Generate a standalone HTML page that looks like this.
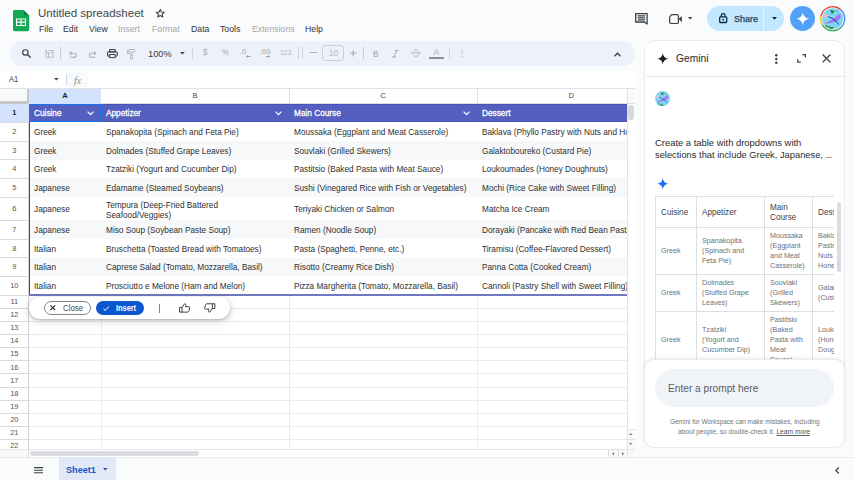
<!DOCTYPE html>
<html lang="en">
<head>
<meta charset="utf-8">
<title>Untitled spreadsheet - Google Sheets</title>
<style>
*{box-sizing:border-box;margin:0;padding:0}
html,body{width:854px;height:480px;overflow:hidden}
body{position:relative;background:#f9fbfd;font-family:"Liberation Sans",Arial,sans-serif;color:#1f1f1f;-webkit-font-smoothing:antialiased}
.a{position:absolute}
.t{position:absolute;white-space:nowrap;transform-origin:0 50%;line-height:1}
svg{position:absolute;overflow:visible}
/* header */
#title{left:37.700px;top:7.500px;font-size:11.800px;color:#444746;transform:scaleX(.978)}
.menu{top:23.600px;font-size:9.400px;color:#333639;transform:scaleX(.93)}
.menu.dis{color:#a3a6aa}
/* toolbar */
#toolbar{left:10px;top:40.5px;width:624.5px;height:25px;border-radius:12.5px;background:#edf2fa}
.sep{position:absolute;width:1px;background:#c9ccd1;top:47px;height:12px}
.tb{top:48.500px;font-size:9.400px;color:#a9adb3}
/* formula bar */
#fbar{left:0;top:71px;width:634.7px;height:17.3px;background:#fff}
/* grid */
#grid{left:0;top:88px;width:634.7px;height:369.3px;background:#fff;overflow:hidden}
.vl{position:absolute;width:1px;background:#dcdcdc}
.vl.lt{background:#ebebed}
.hl{position:absolute;height:1px;background:linear-gradient(90deg,#dadada 0,#dadada 28.500px,#ebebed 28.500px)}
.rn{position:absolute;left:0;width:28.5px;text-align:center;font-size:7.4px;color:#555;line-height:1}
.cn{position:absolute;top:4.100px;font-size:7.600px;color:#444;line-height:1;text-align:center}
.row{position:absolute;left:29.5px;width:597.7px;overflow:hidden}
.row.alt{background:#f6f8f9}
.hrow>*{margin-top:0}
.c{position:absolute;white-space:nowrap;font-size:8.800px;color:#2d2f31;line-height:1;transform-origin:0 50%;transform:scaleX(.939);margin-top:0.700px}
.hc{position:absolute;white-space:nowrap;font-size:8.9px;color:#fff;line-height:1;transform-origin:0 50%;transform:scaleX(.93);-webkit-text-stroke:0.280px #fff}
/* panel */
#panel{left:643.900px;top:40.200px;width:200.700px;height:408px;background:#fff;border:1px solid #e9ebee;border-radius:11px;overflow:hidden}
.pt{position:absolute;white-space:nowrap;line-height:1;transform-origin:0 50%}
.gc{position:absolute;font-size:7.300px;line-height:10px;color:#6e7277;transform-origin:0 0;transform:scaleX(.98);margin-left:0.400px;white-space:nowrap}
.gh{position:absolute;font-size:8.200px;line-height:10px;color:#3c4043;transform-origin:0 0;transform:scaleX(.995);margin-left:0.400px;margin-top:0.700px;white-space:nowrap}
</style>
</head>
<body>

<!-- ===== HEADER ===== -->
<svg class="a" style="left:13px;top:9.8px" width="16.2" height="21.2" viewBox="0 0 16.2 21.2">
  <path d="M1.6 0H10.6L16.2 5.6V19.6A1.6 1.6 0 0 1 14.6 21.2H1.6A1.6 1.6 0 0 1 0 19.6V1.6A1.6 1.6 0 0 1 1.6 0Z" fill="#11a953"/>
  <path d="M11 0.400L15.800 5.200H12.400A1.400 1.400 0 0 1 11 3.800Z" fill="#0b7f40"/>
  <path d="M3 8.400V16H13.100V8.400ZM4.100 9.500H7.500V11.600H4.100ZM8.600 9.500H12V11.600H8.600ZM4.100 12.700H7.500V14.900H4.100ZM8.600 12.700H12V14.900H8.600Z" fill="#fff" fill-rule="evenodd"/>
</svg>
<div class="t" id="title">Untitled spreadsheet</div>
<svg class="a" style="left:155.300px;top:8.400px" width="10.600" height="10.600" viewBox="0 0 24 24"><path d="M12 3.2l2.6 6 6.5.6-4.9 4.3 1.5 6.4L12 17.1l-5.7 3.4 1.5-6.4-4.9-4.3 6.5-.6z" fill="none" stroke="#3c4043" stroke-width="2.400" stroke-linejoin="round"/></svg>

<div class="t menu" style="left:38.8px">File</div>
<div class="t menu" style="left:63.2px">Edit</div>
<div class="t menu" style="left:88.7px">View</div>
<div class="t menu dis" style="left:117.8px">Insert</div>
<div class="t menu dis" style="left:151.6px">Format</div>
<div class="t menu" style="left:190.8px">Data</div>
<div class="t menu" style="left:220.2px">Tools</div>
<div class="t menu dis" style="left:251.6px">Extensions</div>
<div class="t menu" style="left:305px">Help</div>

<!-- right header icons -->
<svg class="a" style="left:634.5px;top:12.9px" width="12.8" height="12.2" viewBox="0 0 12.8 12.2">
  <path d="M0.7 0.7H12.1V11L9.6 9H0.7Z" fill="none" stroke="#3c4043" stroke-width="1.3" stroke-linejoin="round"/>
  <path d="M2.700 2.900H10.100M2.700 4.900H10.100M2.700 6.900H10.100" stroke="#3c4043" stroke-width="1.050"/>
</svg>
<svg class="a" style="left:669px;top:14px" width="13.2" height="10.2" viewBox="0 0 13.2 10.2">
  <path d="M2.6 0.7H8.2A1.2 1.2 0 0 1 9.4 1.9V8.3A1.2 1.2 0 0 1 8.2 9.5H1.9A1.2 1.2 0 0 1 0.7 8.3V2.8Z" fill="none" stroke="#3c4043" stroke-width="1.200" stroke-linejoin="round"/>
  <path d="M9.900 5.100L12.500 2.700V7.500Z" fill="#3c4043" stroke="#3c4043" stroke-width="0.700" stroke-linejoin="round"/>
</svg>
<svg class="a" style="left:688px;top:17px" width="4.4" height="2.4" viewBox="0 0 4.4 2.4"><path d="M0 0H4.4L2.2 2.4Z" fill="#3c4043"/></svg>

<div class="a" style="left:707px;top:6.2px;width:77.3px;height:25px;border-radius:12.5px;background:#c2e7ff"></div>
<div class="a" style="left:763px;top:6.2px;width:1px;height:25px;background:#e4f4ff"></div>
<svg class="a" style="left:718.8px;top:13.2px" width="8.4" height="10.2" viewBox="0 0 8.4 10.2">
  <rect x="0.65" y="3.9" width="7.1" height="5.6" rx="0.9" fill="none" stroke="#0d2a45" stroke-width="1.3"/>
  <path d="M2.3 3.9V2.6A1.9 1.9 0 0 1 6.1 2.6V3.9" fill="none" stroke="#0d2a45" stroke-width="1.2"/>
  <circle cx="4.2" cy="6.7" r="0.9" fill="#0d2a45"/>
</svg>
<div class="t" style="left:734px;top:13.8px;font-size:9.600px;color:#22405a;-webkit-text-stroke:0.250px #22405a;transform:scaleX(.94)">Share</div>
<svg class="a" style="left:771.6px;top:17.4px" width="5" height="2.7" viewBox="0 0 5 2.7"><path d="M0 0H5L2.5 2.7Z" fill="#0d2a45"/></svg>

<div class="a" style="left:789.8px;top:6px;width:25px;height:25px;border-radius:50%;background:#4fa2f8"></div>
<svg class="a" style="left:795.500px;top:11.700px" width="13.600" height="13.600" viewBox="0 0 24 24"><path d="M12 0C12.6 6.8 17.2 11.4 24 12 17.2 12.6 12.6 17.2 12 24 11.4 17.2 6.8 12.6 0 12 6.800 11.4 11.4 6.8 12 0Z" fill="#fff"/></svg>

<!-- avatar -->
<svg class="a" style="left:819.600px;top:5.800px" width="25.400" height="25.400" viewBox="-2 -2 304 304">
  <circle cx="150" cy="150" r="128" fill="#7fd6ec"/>
  <path d="M42 116l22-24 26 10 4 22-20 16-24-6z" fill="#f6b5dc"/>
  <path d="M46 204C100 194 176 146 222 94 264 102 252 152 206 176 152 202 92 214 46 204Z" fill="#a873f3"/>
  <path d="M96 127C134 136 184 166 220 216" stroke="#2b4fcb" stroke-width="13" fill="none" stroke-linecap="round"/>
  <path d="M116 40l30 16 24-8-8 30-22 12-10-20zM194 48l20 10-16 10z" fill="#0f7a32"/>
  <path d="M66 234l18 14M104 246l22 20 26-6" stroke="#0f7a32" stroke-width="17" fill="none" stroke-linecap="round"/>
  <circle cx="150" cy="150" r="132" fill="none" stroke="#fff" stroke-width="8"/>
  <circle cx="150" cy="150" r="143.500" fill="none" stroke="#ea4335" stroke-width="16" stroke-dasharray="296 2000" transform="rotate(-167 150 150)"/>
  <circle cx="150" cy="150" r="143.500" fill="none" stroke="#4285f4" stroke-width="16" stroke-dasharray="240 2000" transform="rotate(-50 150 150)"/>
  <circle cx="150" cy="150" r="143.500" fill="none" stroke="#34a853" stroke-width="16" stroke-dasharray="265 2000" transform="rotate(45 150 150)"/>
  <circle cx="150" cy="150" r="143.500" fill="none" stroke="#fbbc04" stroke-width="16" stroke-dasharray="110 2000" transform="rotate(150 150 150)"/>
</svg>

<!-- ===== TOOLBAR ===== -->
<div class="a" id="toolbar"></div>
<!-- search -->
<svg class="a" style="left:22.4px;top:49px" width="9" height="9" viewBox="0 0 9 9"><circle cx="3.400" cy="3.400" r="2.700" fill="none" stroke="#3c4043" stroke-width="1.150"/><path d="M5.400 5.400L8.300 8.300" stroke="#3c4043" stroke-width="1.350" stroke-linecap="round"/></svg>
<!-- table icon disabled -->
<svg class="a" style="left:44.6px;top:50px" width="8.6" height="7.8" viewBox="0 0 8.6 7.8"><path d="M0 0.500H2M1 0V7.300H8.100V0.500H3.600M1 2.800H8.100M3.500 2.800V7.300" fill="none" stroke="#b9bdc3" stroke-width="1"/></svg>
<div class="sep" style="left:60px"></div>
<!-- undo -->
<svg class="a" style="left:69.100px;top:50.600px" width="7.700" height="6.900" viewBox="0 0 7.700 6.900"><path d="M0 2.200L2.500 -0.100V4.500Z" fill="#a6aab0"/><path d="M2 2.200H5.200A2.050 2.050 0 0 1 5.200 6.300H1.200" fill="none" stroke="#a6aab0" stroke-width="1.050"/></svg>
<!-- redo -->
<svg class="a" style="left:88.700px;top:50.600px" width="7.700" height="6.900" viewBox="0 0 7.700 6.900"><g transform="translate(7.700 0) scale(-1 1)"><path d="M0 2.200L2.500 -0.100V4.500Z" fill="#adb1b7"/><path d="M2 2.200H5.200A2.050 2.050 0 0 1 5.200 6.300H1.200" fill="none" stroke="#adb1b7" stroke-width="1.050"/></g></svg>
<!-- print -->
<svg class="a" style="left:107.100px;top:49px" width="10.900" height="9.200" viewBox="0 0 10.900 9.200">
  <rect x="2.700" y="0.550" width="5.500" height="2.300" fill="none" stroke="#444746" stroke-width="1.050"/>
  <rect x="0.550" y="2.850" width="9.800" height="4.300" rx="1.200" fill="none" stroke="#444746" stroke-width="1.100"/>
  <rect x="2.700" y="5.500" width="5.500" height="3.100" fill="#edf2fa" stroke="#444746" stroke-width="1.050"/>
</svg>
<!-- paint format -->
<svg class="a" style="left:127.2px;top:48.800px" width="9.200" height="10.400" viewBox="0 0 9.200 10.400">
  <rect x="1.700" y="0.500" width="6.200" height="2.600" rx="0.500" fill="none" stroke="#b4b8be" stroke-width="1"/>
  <path d="M1.700 1.800H0.500V4.600H4.600V6.400" fill="none" stroke="#b4b8be" stroke-width="1"/>
  <rect x="3.700" y="6.500" width="1.900" height="3.300" fill="none" stroke="#b4b8be" stroke-width="0.900"/>
</svg>
<div class="t" style="left:148.200px;top:48.800px;font-size:9.600px;color:#3c4043;transform:scaleX(.97)">100%</div>
<svg class="a" style="left:179.600px;top:52.400px" width="4.800" height="2.600" viewBox="0 0 4.800 2.600"><path d="M0 0H4.800L2.400 2.600Z" fill="#3c4043"/></svg>
<div class="sep" style="left:192px;background:#d3d7dd"></div>
<div class="t tb" style="left:202.700px;top:48.300px;font-size:8.500px;transform:scaleX(.95)">$</div>
<div class="t tb" style="left:221.800px;top:48.400px;font-size:8.600px;transform:scaleX(.9)">%</div>
<div class="t tb" style="left:239.800px;top:48.400px;font-size:7.800px;color:#9da1a7">.0</div>
<svg class="a" style="left:245.800px;top:54.800px" width="4.400" height="3" viewBox="0 0 4.400 3"><path d="M4.400 1.500H0.600M1.800 0.300L0.500 1.500L1.800 2.700" fill="none" stroke="#9a9ea4" stroke-width="0.950"/></svg>
<div class="t tb" style="left:259.800px;top:48.400px;font-size:7.800px;color:#9da1a7;transform:scaleX(.96)">.00</div>
<svg class="a" style="left:265.600px;top:54.800px" width="4.400" height="3" viewBox="0 0 4.400 3"><path d="M0 1.500H3.800M2.600 0.300L3.900 1.500L2.600 2.700" fill="none" stroke="#9a9ea4" stroke-width="0.950"/></svg>
<div class="t tb" style="left:280.400px;top:49px;font-size:7.800px;color:#b4b8be;transform:scaleX(.88)">123</div>
<div class="sep" style="left:298px;background:#d3d7dd"></div>
<div class="sep" style="left:302.200px;background:#d3d7dd"></div>
<div class="a" style="left:310px;top:52.300px;width:6.600px;height:1.150px;background:#b0b4ba"></div>
<div class="a" style="left:322.400px;top:45.300px;width:21.300px;height:15.300px;border:1px solid #cdd0d4;border-radius:3px"></div>
<div class="t tb" style="left:328.600px;top:48.800px;font-size:8.800px;color:#b4b8be;transform:scaleX(.95)">10</div>
<svg class="a" style="left:350.200px;top:49.800px" width="6.400" height="6.400" viewBox="0 0 6.400 6.400"><path d="M0 3.200H6.400M3.200 0V6.400" stroke="#b0b4ba" stroke-width="1.200"/></svg>
<div class="sep" style="left:363px"></div>
<div class="t tb" style="left:372.900px;top:49.200px;font-size:9.400px;font-weight:bold;color:#b2b6bc;transform:scaleX(.82)">B</div>
<svg class="a" style="left:392.400px;top:49.600px" width="6.800" height="7.400" viewBox="0 0 6.800 7.400"><path d="M2.600 0.500H6.600M0.200 6.900H4.200M4.700 0.500L2.100 6.900" fill="none" stroke="#b0b4ba" stroke-width="1.100"/></svg>
<!-- strikethrough -->
<svg class="a" style="left:411px;top:49.200px" width="10" height="8.400" viewBox="0 0 10 8.400">
  <path d="M7 2.400C6.800 1.200 6 0.600 5 0.600 3.900 0.600 3 1.200 3 2.200M3 6.200C3.200 7.300 4 7.800 5 7.800 6.200 7.800 7 7.200 7 6.200 7 5.600 6.800 5.200 6.400 4.900" fill="none" stroke="#b0b4ba" stroke-width="1"/>
  <path d="M0 4H10" stroke="#a9adb3" stroke-width="0.900"/>
</svg>
<!-- text color -->
<div class="t" style="left:433.500px;top:48.200px;font-size:8.400px;color:#a9adb3">A</div>
<div class="a" style="left:429.200px;top:57px;width:14.800px;height:2.300px;background:#8d8f92"></div>
<div class="sep" style="left:449px;background:#d3d7dd"></div>
<svg class="a" style="left:460.800px;top:50.200px" width="2" height="7.200" viewBox="0 0 2 7.200"><circle cx="1" cy="0.900" r="0.800" fill="#b4b8be"/><circle cx="1" cy="3.600" r="0.800" fill="#b4b8be"/><circle cx="1" cy="6.300" r="0.800" fill="#b4b8be"/></svg>
<svg class="a" style="left:613.600px;top:51.600px" width="7" height="4.800" viewBox="0 0 7 4.800"><path d="M0.500 4.300L3.500 1.200L6.500 4.300" fill="none" stroke="#3c4043" stroke-width="1.300"/></svg>

<!-- ===== FORMULA BAR ===== -->
<div class="a" id="fbar"></div>
<div class="t" style="left:8.700px;top:75.300px;font-size:8.600px;color:#3c4043;transform:scaleX(.88)">A1</div>
<svg class="a" style="left:53.700px;top:78px" width="4.600" height="2.500" viewBox="0 0 4.600 2.500"><path d="M0 0H4.600L2.300 2.500Z" fill="#3c4043"/></svg>
<div class="a" style="left:66.400px;top:74px;width:1px;height:11px;background:#d5d8dc"></div>
<div class="a" style="left:67.400px;top:72.400px;width:20.500px;height:14.800px;background:#f8f9fa"></div>
<div class="t" style="left:72.600px;top:74.600px;margin-left:1.200px;font-size:11px;color:#999ca0;font-style:italic;font-family:'Liberation Serif',serif;letter-spacing:-0.300px">fx</div>

<!-- ===== GRID ===== -->
<div class="a" id="grid">
<div class="a" style="left:0;top:0;width:634.7px;height:1px;background:#e1e1e1"></div>
<div class="a" style="left:0;top:0.500px;width:28.800px;height:15.300px;background:#f8f9fa;border-right:2.700px solid #c6c6c6;border-bottom:3.200px solid #c6c6c6"></div>
<div class="a" style="left:28.800px;top:0.500px;width:72.200px;height:15.300px;background:#d3e3fd"></div>
<div class="a" style="left:0;top:15.7px;width:28.800px;height:18.600px;background:#d3e3fd"></div>
<div class="a" style="left:627.300px;top:0.500px;width:7.400px;height:15.300px;background:#f8f9fa;border-left:1px solid #e1e1e1;border-bottom:1px solid #e1e1e1"></div>
<div class="cn" style="left:55.1px;width:20px;font-weight:bold;color:#1f1f1f">A</div>
<div class="cn" style="left:185.0px;width:20px;font-weight:normal;color:#444">B</div>
<div class="cn" style="left:373.0px;width:20px;font-weight:normal;color:#444">C</div>
<div class="cn" style="left:561.300px;width:20px;font-weight:normal;color:#444">D</div>
<div class="vl" style="left:288.5px;top:0;height:15.700px"></div>
<div class="vl" style="left:476.5px;top:0;height:15.700px"></div>
<div class="hl" style="left:101px;top:15.200px;width:526px;background:#dcdcdc"></div>
<div class="hl" style="left:0;top:206.50px;width:627.300px"></div>
<div class="hl" style="left:0;top:219.65px;width:627.300px"></div>
<div class="hl" style="left:0;top:232.80px;width:627.300px"></div>
<div class="hl" style="left:0;top:245.95px;width:627.300px"></div>
<div class="hl" style="left:0;top:259.10px;width:627.300px"></div>
<div class="hl" style="left:0;top:272.25px;width:627.300px"></div>
<div class="hl" style="left:0;top:285.40px;width:627.300px"></div>
<div class="hl" style="left:0;top:298.55px;width:627.300px"></div>
<div class="hl" style="left:0;top:311.70px;width:627.300px"></div>
<div class="hl" style="left:0;top:324.85px;width:627.300px"></div>
<div class="hl" style="left:0;top:338.00px;width:627.300px"></div>
<div class="hl" style="left:0;top:351.15px;width:627.300px"></div>
<div class="hl" style="left:0;top:364.30px;width:627.300px"></div>
<div class="hl" style="left:0;top:377.45px;width:627.300px"></div>
<div class="hl" style="left:0;top:33.80px;width:28.800px"></div>
<div class="hl" style="left:0;top:52.50px;width:28.800px"></div>
<div class="hl" style="left:0;top:71.20px;width:28.800px"></div>
<div class="hl" style="left:0;top:89.80px;width:28.800px"></div>
<div class="hl" style="left:0;top:108.50px;width:28.800px"></div>
<div class="hl" style="left:0;top:131.80px;width:28.800px"></div>
<div class="hl" style="left:0;top:150.50px;width:28.800px"></div>
<div class="hl" style="left:0;top:169.20px;width:28.800px"></div>
<div class="hl" style="left:0;top:187.80px;width:28.800px"></div>
<div class="vl lt" style="left:100.5px;top:207px;height:170px"></div>
<div class="vl lt" style="left:288.5px;top:207px;height:170px"></div>
<div class="vl lt" style="left:476.5px;top:207px;height:170px"></div>
<div class="vl" style="left:28.300px;top:34.300px;height:340px;background:#d2d2d2"></div>
<div class="vl" style="left:626.800px;top:15.700px;height:360px;background:#e4e4e6"></div>
<div class="rn" style="top:21.30px;font-weight:bold;color:#1f1f1f;">1</div>
<div class="rn" style="top:39.95px;">2</div>
<div class="rn" style="top:58.65px;">3</div>
<div class="rn" style="top:77.30px;">4</div>
<div class="rn" style="top:95.95px;">5</div>
<div class="rn" style="top:116.95px;">6</div>
<div class="rn" style="top:137.95px;">7</div>
<div class="rn" style="top:156.65px;">8</div>
<div class="rn" style="top:175.30px;">9</div>
<div class="rn" style="top:193.95px;">10</div>
<div class="rn" style="top:209.87px;">11</div>
<div class="rn" style="top:223.03px;">12</div>
<div class="rn" style="top:236.18px;">13</div>
<div class="rn" style="top:249.32px;">14</div>
<div class="rn" style="top:262.48px;">15</div>
<div class="rn" style="top:275.62px;">16</div>
<div class="rn" style="top:288.78px;">17</div>
<div class="rn" style="top:301.92px;">18</div>
<div class="rn" style="top:315.07px;">19</div>
<div class="rn" style="top:328.23px;">20</div>
<div class="rn" style="top:341.37px;">21</div>
<div class="rn" style="top:353.500px;">22</div>
<div class="row hrow" style="top:15.700px;height:18.600px;background:#545fc0;left:29.200px;width:598.100px;box-shadow:inset 0 0.800px 0 #4852b3,inset 0 -0.800px 0 #4650b0">
<div class="hc" style="left:4.5px;top:5.00px">Cuisine</div>
<div class="hc" style="left:77.3px;top:5.00px">Appetizer</div>
<div class="hc" style="left:265.3px;top:5.00px">Main Course</div>
<div class="hc" style="left:453.3px;top:5.00px">Dessert</div>
<svg style="left:58.3px;top:7.300px" width="7" height="4.500" viewBox="0 0 7 4.500"><path d="M0.600 0.600L3.500 3.600L6.400 0.600" fill="none" stroke="#fff" stroke-width="1.200"/></svg>
<svg style="left:246.3px;top:7.300px" width="7" height="4.500" viewBox="0 0 7 4.500"><path d="M0.600 0.600L3.500 3.600L6.400 0.600" fill="none" stroke="#fff" stroke-width="1.200"/></svg>
<svg style="left:434.3px;top:7.300px" width="7" height="4.500" viewBox="0 0 7 4.500"><path d="M0.600 0.600L3.500 3.600L6.400 0.600" fill="none" stroke="#fff" stroke-width="1.200"/></svg>
</div>
<div class="row" style="top:34.3px;height:18.70px">
<div class="c" style="left:4.2px;top:5.05px">Greek</div>
<div class="c" style="left:76.4px;top:5.05px">Spanakopita (Spinach and Feta Pie)</div>
<div class="c" style="left:264.4px;top:5.05px">Moussaka (Eggplant and Meat Casserole)</div>
<div class="c" style="left:452.4px;top:5.05px">Baklava (Phyllo Pastry with Nuts and Honey)</div>
</div>
<div class="row alt" style="top:53px;height:18.70px">
<div class="c" style="left:4.2px;top:5.05px">Greek</div>
<div class="c" style="left:76.4px;top:5.05px">Dolmades (Stuffed Grape Leaves)</div>
<div class="c" style="left:264.4px;top:5.05px">Souvlaki (Grilled Skewers)</div>
<div class="c" style="left:452.4px;top:5.05px">Galaktoboureko (Custard Pie)</div>
</div>
<div class="row" style="top:71.7px;height:18.60px">
<div class="c" style="left:4.2px;top:5.00px">Greek</div>
<div class="c" style="left:76.4px;top:5.00px">Tzatziki (Yogurt and Cucumber Dip)</div>
<div class="c" style="left:264.4px;top:5.00px">Pastitsio (Baked Pasta with Meat Sauce)</div>
<div class="c" style="left:452.4px;top:5.00px">Loukoumades (Honey Doughnuts)</div>
</div>
<div class="row alt" style="top:90.3px;height:18.70px">
<div class="c" style="left:4.2px;top:5.05px">Japanese</div>
<div class="c" style="left:76.4px;top:5.05px">Edamame (Steamed Soybeans)</div>
<div class="c" style="left:264.4px;top:5.05px">Sushi (Vinegared Rice with Fish or Vegetables)</div>
<div class="c" style="left:452.4px;top:5.05px">Mochi (Rice Cake with Sweet Filling)</div>
</div>
<div class="row" style="top:109px;height:23.30px">
<div class="c" style="left:4.2px;top:7.35px">Japanese</div>
<div class="c" style="left:76.400px;top:1.900px;line-height:10.3px">Tempura (Deep-Fried Battered<br>Seafood/Veggies)</div>
<div class="c" style="left:264.4px;top:7.35px">Teriyaki Chicken or Salmon</div>
<div class="c" style="left:452.4px;top:7.35px">Matcha Ice Cream</div>
</div>
<div class="row alt" style="top:132.3px;height:18.70px">
<div class="c" style="left:4.2px;top:5.05px">Japanese</div>
<div class="c" style="left:76.4px;top:5.05px">Miso Soup (Soybean Paste Soup)</div>
<div class="c" style="left:264.4px;top:5.05px">Ramen (Noodle Soup)</div>
<div class="c" style="left:452.4px;top:5.05px">Dorayaki (Pancake with Red Bean Paste)</div>
</div>
<div class="row" style="top:151px;height:18.70px">
<div class="c" style="left:4.2px;top:5.05px">Italian</div>
<div class="c" style="left:76.4px;top:5.05px">Bruschetta (Toasted Bread with Tomatoes)</div>
<div class="c" style="left:264.4px;top:5.05px">Pasta (Spaghetti, Penne, etc.)</div>
<div class="c" style="left:452.4px;top:5.05px">Tiramisu (Coffee-Flavored Dessert)</div>
</div>
<div class="row alt" style="top:169.7px;height:18.60px">
<div class="c" style="left:4.2px;top:5.00px">Italian</div>
<div class="c" style="left:76.4px;top:5.00px">Caprese Salad (Tomato, Mozzarella, Basil)</div>
<div class="c" style="left:264.4px;top:5.00px">Risotto (Creamy Rice Dish)</div>
<div class="c" style="left:452.4px;top:5.00px">Panna Cotta (Cooked Cream)</div>
</div>
<div class="row" style="top:188.3px;height:18.70px">
<div class="c" style="left:4.2px;top:5.05px">Italian</div>
<div class="c" style="left:76.4px;top:5.05px">Prosciutto e Melone (Ham and Melon)</div>
<div class="c" style="left:264.4px;top:5.05px">Pizza Margherita (Tomato, Mozzarella, Basil)</div>
<div class="c" style="left:452.4px;top:5.05px">Cannoli (Pastry Shell with Sweet Filling)</div>
</div>
<div class="a" style="left:28.800px;top:15.7px;width:1.500px;height:192.1px;background:#3f479f"></div>
<div class="a" style="left:28.800px;top:206.3px;width:598.500px;height:1.500px;background:#7078c0"></div>
<div class="a" style="left:28.700px;top:15.800px;width:72.400px;height:18.300px;border:1.300px solid #1a73e8"></div>
<div class="a" style="left:628.400px;top:16.7px;width:5.400px;height:15.300px;border-radius:2.700px;background:#d5d8dd"></div>
<div class="a" style="left:0;top:361.2px;width:634.700px;height:8.100px;background:#fff;border-top:1px solid #e4e6e9"></div>
<div class="a" style="left:0;top:361.2px;width:28.800px;height:8.100px;background:#f8f9fa;border-right:1px solid #d9d9d9;border-top:1px solid #e4e6e9"></div>
<div class="a" style="left:30.200px;top:363.2px;width:168.500px;height:4.800px;border-radius:2.400px;background:#dadce0"></div>
<div class="a" style="left:627.300px;top:341px;width:7.400px;height:20.200px;background:#f8f9fa;border-left:1px solid #e1e1e1;border-top:1px solid #e1e1e1"></div>
<div class="a" style="left:627.300px;top:351.2px;width:7.400px;height:1px;background:#e1e1e1"></div>
<svg style="left:629.300px;top:345.3px" width="3.400" height="2" viewBox="0 0 3.400 2"><path d="M0 2H3.400L1.700 0Z" fill="#777"/></svg>
<svg style="left:629.300px;top:355.3px" width="3.400" height="2" viewBox="0 0 3.400 2"><path d="M0 0H3.400L1.700 2Z" fill="#777"/></svg>
<div class="a" style="left:607.700px;top:361.2px;width:27px;height:8.100px;background:#f8f9fa;border-left:1px solid #e1e1e1;border-top:1px solid #e1e1e1"></div>
<div class="a" style="left:617.500px;top:361.2px;width:1px;height:8.100px;background:#e1e1e1"></div>
<div class="a" style="left:627.300px;top:361.2px;width:1px;height:8.100px;background:#e1e1e1"></div>
<svg style="left:611.700px;top:363.6px" width="2" height="3.400" viewBox="0 0 2 3.400"><path d="M2 0V3.400L0 1.700Z" fill="#777"/></svg>
<svg style="left:621.700px;top:363.6px" width="2" height="3.400" viewBox="0 0 2 3.400"><path d="M0 0V3.400L2 1.700Z" fill="#777"/></svg>
</div>

<!-- floating action pill -->
<div class="a" style="left:28.500px;top:297px;width:201.500px;height:22.300px;border-radius:11.200px;background:#fff;box-shadow:0 1px 2px rgba(60,64,67,.3),0 2px 6px 2px rgba(60,64,67,.15)"></div>
<div class="a" style="left:43.700px;top:301px;width:47.100px;height:14.400px;border-radius:7.200px;border:1px solid #80868b"></div>
<svg class="a" style="left:50.200px;top:305.400px" width="5.600" height="5.600" viewBox="0 0 5.600 5.600"><path d="M0.400 0.400L5.200 5.200M5.200 0.400L0.400 5.200" stroke="#1f1f1f" stroke-width="1.100"/></svg>
<div class="t" style="left:63.300px;top:304.700px;font-size:8.200px;color:#444746;transform:scaleX(.96)">Close</div>
<div class="a" style="left:96.200px;top:301px;width:48.200px;height:14.400px;border-radius:7.200px;background:#0b57d0"></div>
<svg class="a" style="left:102.600px;top:305.800px" width="6.400" height="5" viewBox="0 0 6.400 5"><path d="M0.500 2.800L2.300 4.400L5.900 0.500" fill="none" stroke="#fff" stroke-width="1"/></svg>
<div class="t" style="left:115.800px;top:304.700px;font-size:8.200px;color:#fff;font-weight:bold;transform:scaleX(.9)">Insert</div>
<div class="a" style="left:159px;top:303.500px;width:1px;height:9.200px;background:#80868b"></div>
<svg class="a" style="left:178.600px;top:302.900px" width="11.400" height="9.900" viewBox="0 0 12 10.400">
  <path d="M0.600 4.600H3.200V9.600H0.600ZM3.200 4.600L6 0.700C7 0.700 7.400 1.500 7.200 2.300L6.800 3.900H10.300C11 3.900 11.500 4.500 11.300 5.200L10.200 8.800C10 9.300 9.600 9.600 9.100 9.600H3.200" fill="none" stroke="#3c4043" stroke-width="1.050" stroke-linejoin="round"/>
</svg>
<svg class="a" style="left:203.600px;top:303.300px" width="11.400" height="9.900" viewBox="0 0 12 10.400">
  <g transform="rotate(180 6 5.200)"><path d="M0.600 4.600H3.200V9.600H0.600ZM3.200 4.600L6 0.700C7 0.700 7.400 1.500 7.200 2.300L6.800 3.900H10.300C11 3.900 11.500 4.500 11.300 5.200L10.200 8.800C10 9.300 9.600 9.600 9.100 9.600H3.200" fill="none" stroke="#3c4043" stroke-width="1.050" stroke-linejoin="round"/></g>
</svg>

<!-- ===== BOTTOM BAR ===== -->
<div class="a" style="left:0;top:457.300px;width:854px;height:22.700px;background:#f9fbfd;border-top:1px solid #e8eaed"></div>
<svg class="a" style="left:34px;top:467px" width="9" height="6.400" viewBox="0 0 9 6.400"><path d="M0 0.600H9M0 3.200H9M0 5.800H9" stroke="#3c4043" stroke-width="1.100"/></svg>
<div class="a" style="left:59px;top:457.300px;width:56.700px;height:22.700px;background:#e1e9f7"></div>
<div class="t" style="left:66.200px;top:465.200px;font-size:9.600px;color:#1a56c7;font-weight:bold;transform:scaleX(.95)">Sheet1</div>
<svg class="a" style="left:103.400px;top:468.400px" width="4.600" height="2.500" viewBox="0 0 4.600 2.500"><path d="M0 0H4.600L2.300 2.500Z" fill="#1a56c7"/></svg>
<svg class="a" style="left:834.600px;top:466.600px" width="4.400" height="7" viewBox="0 0 4.400 7"><path d="M3.800 0.500L0.800 3.500L3.800 6.500" fill="none" stroke="#3c4043" stroke-width="1.200"/></svg>

<!-- ===== GEMINI PANEL ===== -->
<div class="a" id="panel"><div class="a" style="left:0.700px;top:0.100px;width:200px;height:407px">
<svg style="left:11.2px;top:11.7px" width="11.600" height="11.600" viewBox="0 0 24 24"><path d="M12 0C12.500 7 17 11.500 24 12 17 12.500 12.500 17 12 24 11.500 17 7 12.500 0 12 7 11.500 11.500 7 12 0Z" fill="#1f1f1f"/></svg>
<div class="pt" style="left:30.0px;top:11.9px;font-size:11px;color:#1f1f1f;transform:scaleX(.93)">Gemini</div>
<svg style="left:129.100px;top:12.500px" width="2.600" height="10" viewBox="-0.200 -0.200 2.600 10"><circle cx="1.100" cy="1.100" r="1.250" fill="#3c4043"/><circle cx="1.100" cy="4.800" r="1.250" fill="#3c4043"/><circle cx="1.100" cy="8.500" r="1.250" fill="#3c4043"/></svg>
<svg style="left:151.300px;top:12.600px" width="9.200" height="8.800" viewBox="0 0 8.400 8.400"><path d="M5 0.600H7.800V3.400M3.400 7.800H0.600V5" fill="none" stroke="#3c4043" stroke-width="1.200"/></svg>
<svg style="left:176.300px;top:12.800px" width="9.100" height="8.900" viewBox="0 0 8.400 8.400"><path d="M0.500 0.500L7.900 7.900M7.900 0.500L0.500 7.900" fill="none" stroke="#3c4043" stroke-width="1.250"/></svg>
<div class="a" style="left:0;top:34.3px;width:200px;height:1px;background:#e6e8eb"></div>
<svg style="left:9.500px;top:49.600px" width="15.200" height="15.200" viewBox="20 20 260 260">
  <circle cx="150" cy="150" r="128" fill="#7fd6ec"/>
  <path d="M42 116l22-24 26 10 4 22-20 16-24-6z" fill="#f6b5dc"/>
  <path d="M46 204C100 194 176 146 222 94 264 102 252 152 206 176 152 202 92 214 46 204Z" fill="#a873f3"/>
  <path d="M96 127C134 136 184 166 220 216" stroke="#2b4fcb" stroke-width="13" fill="none" stroke-linecap="round"/>
  <path d="M116 40l30 16 24-8-8 30-22 12-10-20zM194 48l20 10-16 10z" fill="#0f7a32"/>
  <path d="M66 234l18 14M104 246l22 20 26-6" stroke="#0f7a32" stroke-width="17" fill="none" stroke-linecap="round"/>
</svg>
<div class="pt" style="left:9.6px;top:96.5px;font-size:9.600px;color:#2b2d30;transform:scaleX(.98)">Create a table with dropdowns with</div>
<div class="pt" style="left:9.6px;top:109.1px;font-size:9.600px;color:#2b2d30;transform:scaleX(.972)">selections that include Greek, Japanese, <span style="letter-spacing:-0.700px">...</span></div>
<svg style="left:11.2px;top:136.7px" width="11.600" height="11.600" viewBox="0 0 24 24"><path d="M12 0C12.500 7 17 11.500 24 12 17 12.500 12.500 17 12 24 11.500 17 7 12.500 0 12 7 11.500 11.500 7 12 0Z" fill="#1b6ef3"/></svg>
<div class="a" style="left:9.6px;top:154.9px;width:178.6px;height:162.8px;overflow:hidden">
<div class="a" style="left:0px;top:0;width:1px;height:180px;background:#dedfe1"></div>
<div class="a" style="left:41.3px;top:0;width:1px;height:180px;background:#dedfe1"></div>
<div class="a" style="left:109.3px;top:0;width:1px;height:180px;background:#dedfe1"></div>
<div class="a" style="left:157.3px;top:0;width:1px;height:180px;background:#dedfe1"></div>
<div class="a" style="left:0;top:0px;width:230px;height:1px;background:#dedfe1"></div>
<div class="a" style="left:0;top:31px;width:230px;height:1px;background:#dedfe1"></div>
<div class="a" style="left:0;top:77.8px;width:230px;height:1px;background:#dedfe1"></div>
<div class="a" style="left:0;top:114.4px;width:230px;height:1px;background:#dedfe1"></div>
<div class="a" style="left:0;top:171.4px;width:230px;height:1px;background:#dedfe1"></div>
<div class="gh" style="left:5.6px;top:11.0px">Cuisine</div>
<div class="gh" style="left:46.9px;top:11.0px">Appetizer</div>
<div class="gh" style="left:114.9px;top:6.0px">Main<br>Course</div>
<div class="gh" style="left:162.9px;top:11.0px">Dessert</div>
<div class="gc" style="left:5.6px;top:49.9px">Greek</div>
<div class="gc" style="left:46.9px;top:39.9px">Spanakopita<br>(Spinach and<br>Feta Pie)</div>
<div class="gc" style="left:114.9px;top:34.9px">Moussaka<br>(Eggplant<br>and Meat<br>Casserole)</div>
<div class="gc" style="left:162.9px;top:34.9px">Baklava (Phyllo<br>Pastry with<br>Nuts and<br>Honey)</div>
<div class="gc" style="left:5.6px;top:91.6px">Greek</div>
<div class="gc" style="left:46.9px;top:81.6px">Dolmades<br>(Stuffed Grape<br>Leaves)</div>
<div class="gc" style="left:114.9px;top:81.6px">Souvlaki<br>(Grilled<br>Skewers)</div>
<div class="gc" style="left:162.9px;top:86.6px">Galaktoboureko<br>(Custard Pie)</div>
<div class="gc" style="left:5.6px;top:138.4px">Greek</div>
<div class="gc" style="left:46.9px;top:128.4px">Tzatziki<br>(Yogurt and<br>Cucumber Dip)</div>
<div class="gc" style="left:114.9px;top:118.4px">Pastitsio<br>(Baked<br>Pasta with<br>Meat<br>Sauce)</div>
<div class="gc" style="left:162.9px;top:128.4px">Loukoumades<br>(Honey<br>Doughnuts)</div>
</div>
<div class="a" style="left:191.2px;top:160.7px;width:4.400px;height:70.500px;border-radius:2.200px;background:#dadce0"></div>
</div></div>

<div class="a" style="left:643.900px;top:359px;width:200.700px;height:89.200px;border-radius:10px;background:#fff;border:1px solid #e9ebee;box-shadow:0 -1px 3px rgba(60,64,67,.10)"></div>
<div class="a" style="left:654.800px;top:369px;width:179.400px;height:38px;border-radius:19px;background:#f0f4f9"></div>
<div class="t" style="left:667.600px;top:382.600px;font-size:10.700px;color:#595e63;transform:scaleX(.95)">Enter a prompt here</div>
<div class="t" style="left:669.700px;top:418.700px;font-size:6.800px;color:#70757a;transform:scaleX(.948)">Gemini for Workspace can make mistakes, including</div>
<div class="t" style="left:678.400px;top:428.900px;font-size:6.800px;color:#70757a;transform:scaleX(.968)">about people, so double-check it. <span style="color:#4a4d51;border-bottom:0.800px solid #5f6368">Learn more</span></div>

</body>
</html>
